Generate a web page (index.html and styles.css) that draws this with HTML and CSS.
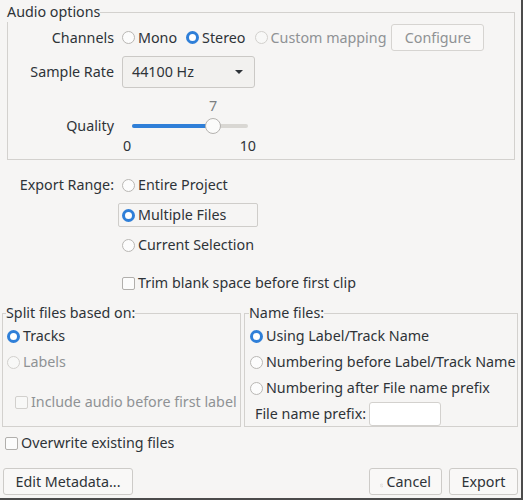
FILE: index.html
```html
<!DOCTYPE html>
<html>
<head>
<meta charset="utf-8">
<title>Export Multiple</title>
<link rel="stylesheet" href="styles.css">
</head>
<body>
<div class="dialog">

    <fieldset class="group audio">
        <legend>Audio options</legend>
        <div class="form">
            <span class="label">Channels</span>
            <div class="choices">
                <label class="radio"><span class="mark"></span>Mono</label>
                <label class="radio checked"><span class="mark"></span>Stereo</label>
                <label class="radio disabled"><span class="mark"></span>Custom mapping</label>
                <button class="btn configure" disabled>Configure</button>
            </div>

            <span class="label">Sample Rate</span>
            <div class="combo"><span>44100 Hz</span><span class="arrow"></span></div>

            <span class="label quality">Quality</span>
            <div class="slider" style="--value: 70%">
                <div class="slider-value"><span>7</span></div>
                <div class="track">
                    <div class="fill"></div>
                    <div class="handle"></div>
                </div>
                <div class="slider-range"><span>0</span><span>10</span></div>
            </div>
        </div>
    </fieldset>

    <div class="range">
        <span class="label">Export Range:</span>
        <div class="range-options">
            <label class="radio"><span class="mark"></span>Entire Project</label>
            <label class="radio checked focus"><span class="mark"></span>Multiple Files</label>
            <label class="radio"><span class="mark"></span>Current Selection</label>
        </div>
        <label class="check trim"><span class="box"></span>Trim blank space before first clip</label>
    </div>

    <div class="split-row">
        <fieldset class="group split">
            <legend>Split files based on:</legend>
            <label class="radio checked"><span class="mark"></span>Tracks</label>
            <label class="radio disabled"><span class="mark"></span>Labels</label>
            <label class="check disabled include"><span class="box"></span>Include audio before first label</label>
        </fieldset>
        <fieldset class="group names">
            <legend>Name files:</legend>
            <label class="radio checked"><span class="mark"></span>Using Label/Track Name</label>
            <label class="radio"><span class="mark"></span>Numbering before Label/Track Name</label>
            <label class="radio"><span class="mark"></span>Numbering after File name prefix</label>
            <div class="prefix">
                <span>File name prefix:</span>
                <input type="text" class="field">
            </div>
        </fieldset>
    </div>

    <label class="check overwrite"><span class="box"></span>Overwrite existing files</label>

    <div class="buttons">
        <button class="btn">Edit Metadata...</button>
        <span class="spacer"></span>
        <button class="btn cancel">
            <svg width="9" height="9" viewBox="0 0 9 9"><circle cx="4.5" cy="4.5" r="3.8" fill="none" stroke="#cfcdca" stroke-width="1.2"/><line x1="2" y1="2" x2="7" y2="7" stroke="#cfcdca" stroke-width="1.2"/></svg>
            Cancel
        </button>
        <button class="btn">Export</button>
    </div>

</div>
</body>
</html>
```

FILE: styles.css
```css
* {
    margin: 0;
    padding: 0;
    box-sizing: border-box;
}

html, body {
    background: #f6f5f4;
}

body {
    width: 523px;
    height: 500px;
    font-family: 'Noto Sans', 'Open Sans', sans-serif;
    font-size: 14.3px;
    line-height: 20px;
    color: #2e3338;
    border-right: 2px solid #4b4b4b;
    border-bottom: 2px solid #4b4b4b;
    overflow: hidden;
}

.dialog {
    display: flex;
    flex-direction: column;
    padding: 2px 3px 0 2px;
}

/* group boxes */
.group {
    border: 1px solid #d3d1ce;
    min-width: 0;
}

.group legend {
    padding: 0;
    margin-left: -1px;
    line-height: 20px;
}

.audio {
    margin-left: 5px;
    width: 508px;
    padding-bottom: 3px;
}

.form {
    display: grid;
    grid-template-columns: 106px auto;
    column-gap: 8px;
    row-gap: 5px;
    margin-top: 2px;
    align-items: center;
    justify-items: start;
}

.label {
    justify-self: end;
    white-space: nowrap;
}

.label.quality {
    align-self: start;
    margin-top: 23px;
}

.choices {
    display: flex;
    align-items: center;
    gap: 9px;
    height: 27px;
}

/* radios and checkboxes */
.radio, .check {
    display: flex;
    align-items: center;
    gap: 3px;
    white-space: nowrap;
    height: 24px;
}

.radio .mark {
    width: 13px;
    height: 13px;
    border-radius: 50%;
    border: 1px solid #b9b7b4;
    background: #fcfcfc;
}

.radio.checked .mark {
    border: 3px solid #2f7fd8;
    background: #fff;
}

.check .box {
    width: 13px;
    height: 13px;
    border-radius: 2px;
    border: 1px solid #b1afac;
    background: #fcfcfc;
}

.disabled {
    color: #8f9294;
}

.disabled .mark, .disabled .box {
    border-color: #d2d0cd;
    background: #f8f8f7;
}

/* buttons and fields */
.btn {
    font: inherit;
    color: inherit;
    height: 27px;
    padding: 0 10px;
    border: 1px solid #cdcbc8;
    border-radius: 3px;
    background: #f9f8f7;
    display: flex;
    align-items: center;
    justify-content: center;
    gap: 3px;
    white-space: nowrap;
}

.btn:disabled {
    color: #8f9294;
    border-color: #d6d4d1;
}

.configure {
    width: 93px;
    margin-left: -4px;
}

.combo {
    width: 133px;
    height: 32px;
    border: 1px solid #cbc9c6;
    border-radius: 3px;
    background: #f2f1ef;
    display: flex;
    align-items: center;
    justify-content: space-between;
    padding: 0 11px 0 9px;
}

.combo .arrow {
    width: 0;
    height: 0;
    border-left: 4px solid transparent;
    border-right: 4px solid transparent;
    border-top: 4px solid #2e3338;
}

.field {
    width: 72px;
    height: 24px;
    border: 1px solid #d3d1ce;
    border-radius: 3px;
    background: #fff;
    font: inherit;
}

/* quality slider */
.slider {
    width: 136px;
    margin-top: 3px;
}

.slider-value {
    margin: 0 10px;
    color: #7b7e80;
}

.slider-value span {
    display: inline-block;
    margin-left: var(--value);
    transform: translateX(-50%);
}

.track {
    position: relative;
    margin: 8px 10px;
    height: 4px;
    border-radius: 2px;
    background: #d9d7d3;
}

.track .fill {
    width: var(--value);
    height: 4px;
    border-radius: 2px;
    background: #2f7fd8;
}

.track .handle {
    position: absolute;
    left: var(--value);
    top: 50%;
    width: 16px;
    height: 16px;
    transform: translate(-50%, -50%);
    border-radius: 50%;
    border: 1px solid #b4b2af;
    background: #fbfbfa;
}

.slider-range {
    display: flex;
    justify-content: space-between;
    padding: 0 2px 0 1px;
}

/* export range */
.range {
    display: grid;
    grid-template-columns: 104px auto;
    column-gap: 8px;
    margin-top: 13px;
    padding-left: 8px;
    justify-items: start;
}

.range .label {
    align-self: start;
    line-height: 24px;
}

.range-options {
    display: grid;
    grid-auto-rows: 24px;
    row-gap: 6px;
    margin-left: -4px;
}

.range-options .radio {
    padding: 0 3px;
    border: 1px solid transparent;
    border-radius: 2px;
}

.range-options .focus {
    border-color: #cfcdca;
}

.trim {
    grid-column: 2;
    margin-top: 14px;
}

/* split / naming groups */
.split-row {
    display: flex;
    gap: 3px;
    margin-top: 8px;
}

.split {
    width: 239px;
    padding: 1px 0 0 4px;
}

.split .radio + .radio {
    margin-top: 2px;
}

.include {
    margin: 16px 0 0 8px;
}

.names {
    width: 274px;
    padding: 1px 0 0 5px;
}

.names .radio + .radio {
    margin-top: 2px;
}

.prefix {
    display: flex;
    align-items: center;
    gap: 3px;
    margin: 2px 0 0 5px;
}

.overwrite {
    margin: 4px 0 0 3px;
}

/* bottom buttons */
.buttons {
    display: flex;
    gap: 7px;
    margin-top: 13px;
    padding-left: 1px;
}

.buttons .spacer {
    flex: 1;
}

.buttons .btn:first-child {
    width: 130px;
}

.cancel {
    width: 73px;
}

.cancel svg {
    margin-top: 8px;
}

.buttons .btn:last-child {
    width: 69px;
}
```
